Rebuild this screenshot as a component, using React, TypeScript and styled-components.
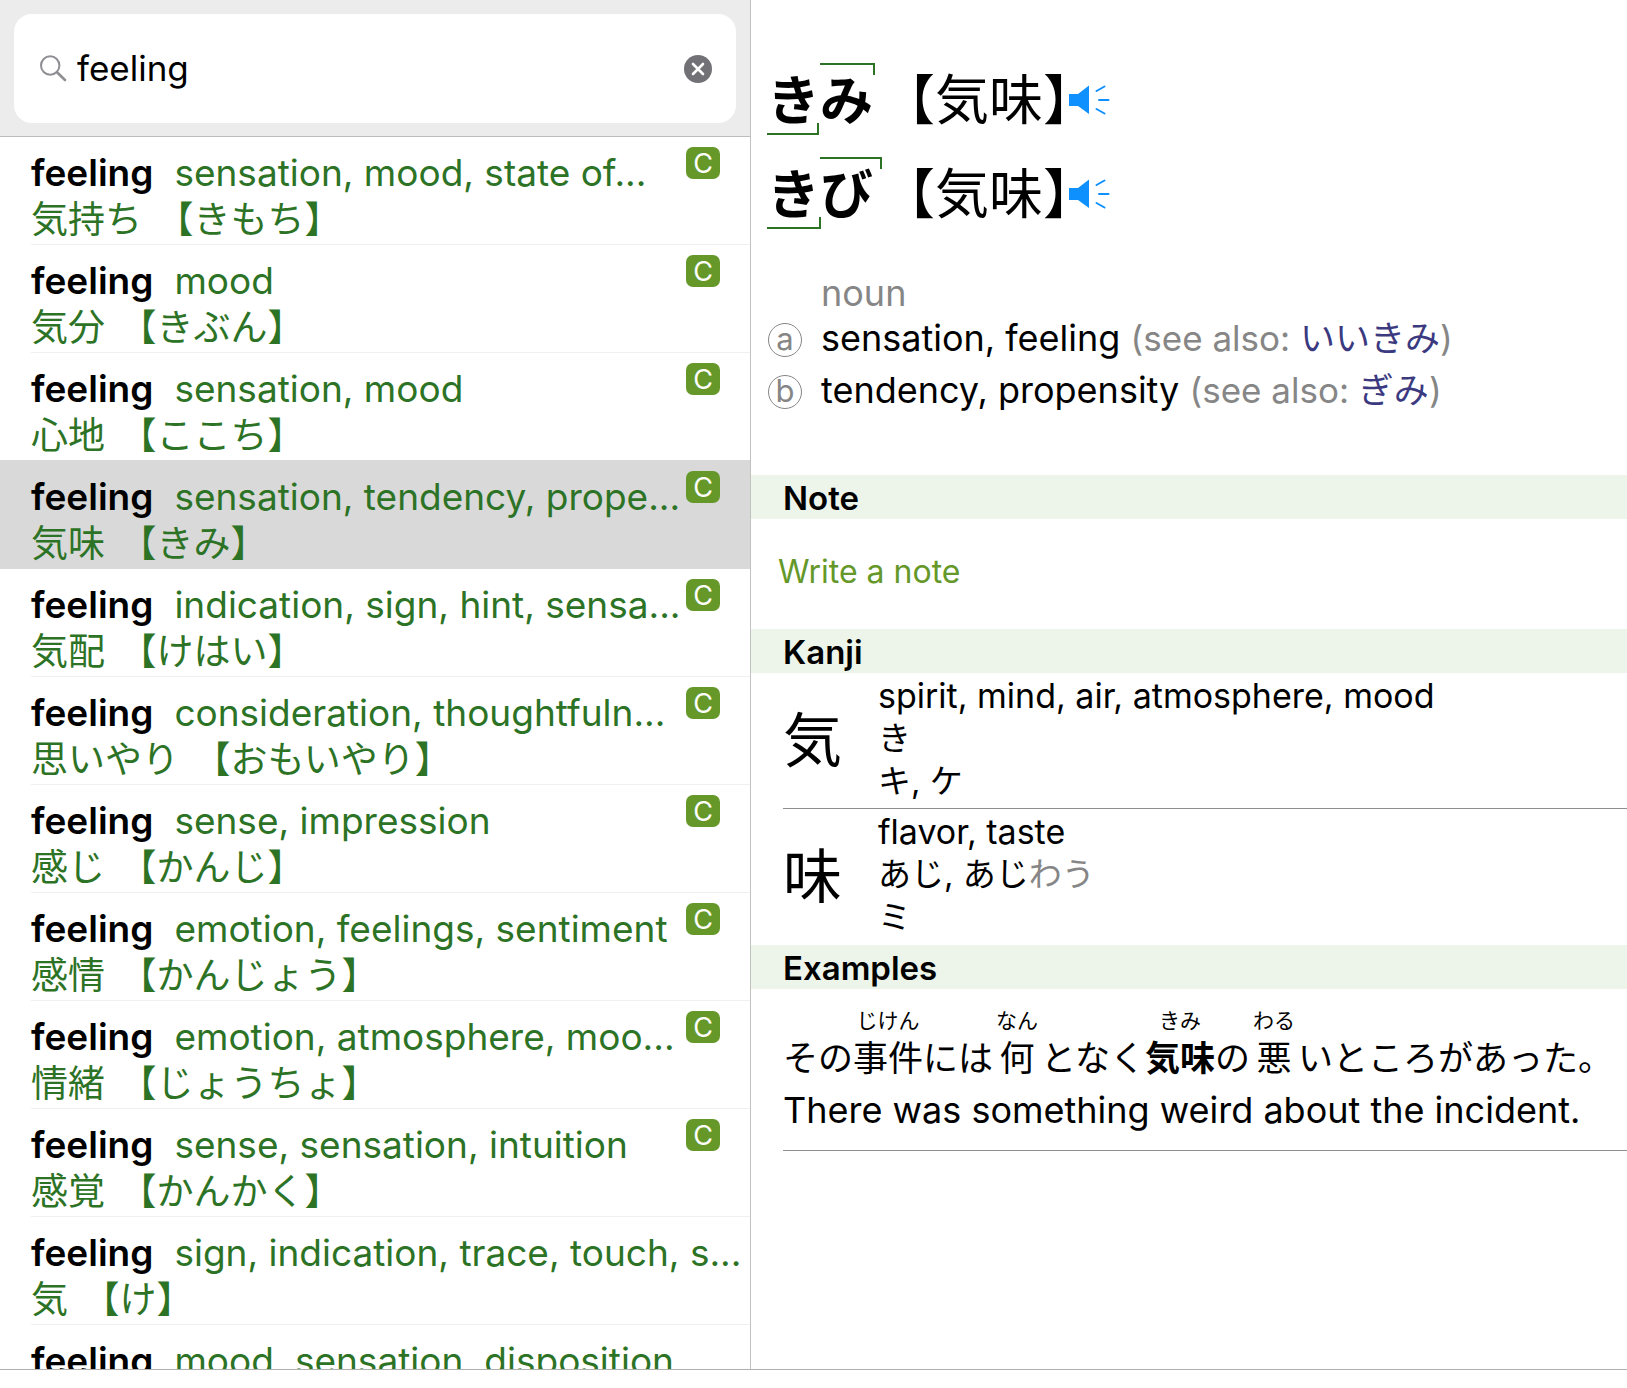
import React, { useState } from "react";
import styled, { createGlobalStyle } from "styled-components";

const GlobalStyle = createGlobalStyle`
  *, *::before, *::after { box-sizing: border-box; }
  html { background: #ffffff; }
  body {
    margin: 0;
    color: #000000;
    font-family: Inter, "Noto Sans CJK JP", sans-serif;
    font-size: 34px;
  }
  button, input { font: inherit; color: inherit; }
  h1, h2, p, ul, ol { margin: 0; padding: 0; font: inherit; }
  ul, ol { list-style: none; }
`;

const Shell = styled.div`
  display: grid;
  grid-template-columns: minmax(0, 751fr) minmax(0, 876fr);
  grid-template-rows: minmax(0, 1fr);
  height: calc(100vh - 18px);
  border-bottom: 1px solid #b0b0b0;
`;

const Sidebar = styled.aside`
  display: flex;
  flex-direction: column;
  overflow: hidden;
  border-right: 1px solid #c2c2c2;
`;

const SearchBar = styled.form`
  flex: none;
  padding: 14px 14px 13px;
  background: #ececec;
  border-bottom: 1px solid #bcbcbc;
`;

const SearchField = styled.label`
  display: flex;
  align-items: center;
  height: 109px;
  padding: 0 24px 0 26px;
  background: #ffffff;
  border-radius: 18px;
`;

const SearchInput = styled.input`
  flex: 1;
  min-width: 0;
  margin-left: 10px;
  padding: 0 0 2px;
  border: 0;
  outline: 0;
  background: transparent;
  font-size: 35px;
  line-height: 48px;
`;

const ClearButton = styled.button`
  display: flex;
  padding: 0;
  border: 0;
  background: none;
`;

const Results = styled.ul`
  flex: 1;
  min-height: 0;
  overflow: hidden;
`;

const ResultButton = styled.button<{ $selected: boolean }>`
  display: block;
  width: 100%;
  padding: 0 0 0 31px;
  border: 0;
  text-align: left;
  background: ${(p) => (p.$selected ? "#d9d9d9" : "transparent")};
  box-shadow: ${(p) => (p.$selected ? "0 -1px 0 #d9d9d9" : "none")};
`;

const ResultBody = styled.span<{ $selected: boolean }>`
  display: flex;
  align-items: flex-start;
  height: 108px;
  border-bottom: 1px solid ${(p) => (p.$selected ? "transparent" : "#efeff4")};
`;

const ResultText = styled.span`
  flex: 1;
  min-width: 0;
  padding-top: 13px;
  color: #2d7326;
  font-size: 37px;
  line-height: 46px;
  white-space: nowrap;
`;

const Line = styled.span`
  display: block;
`;

const JapaneseLine = styled(Line)`
  line-height: 48px;
`;

const Reading = styled.span`
  margin-left: 4px;
`;

const Term = styled.b`
  margin-right: 21px;
  color: #000000;
  font-weight: 600;
`;

const Badge = styled.span`
  flex: none;
  width: 34px;
  height: 32px;
  margin: 10px 30px 0 0;
  border-radius: 7px;
  background: #659829;
  color: #ffffff;
  font-size: 27px;
  line-height: 33px;
  text-align: center;
`;

const Detail = styled.main`
  overflow: hidden;
`;

const Headwords = styled.header`
  padding: 54px 16px 0;
`;

const Headword = styled.h1`
  display: flex;
  align-items: center;
  height: 94px;
  font-size: 54px;
  line-height: 94px;
`;

const Kana = styled.span`
  display: flex;
  width: 141px;
  font-size: 53px;
  font-weight: 700;
`;

const Mora = styled.span<{ $pitch: "low" | "high"; $overhang: number }>`
  position: relative;
  &::after {
    content: "";
    position: absolute;
    right: ${(p) => -p.$overhang}px;
    left: 0;
    height: 12px;
    border: 0 solid #2d7326;
    border-right-width: 2px;
    ${(p) =>
      p.$pitch === "low"
        ? "bottom: 13px; border-bottom-width: 2px;"
        : "top: 9px; border-top-width: 2px;"}
  }
`;

const Spelling = styled.span`
  font-feature-settings: "halt";
`;

const SpeakButton = styled.button`
  display: flex;
  padding: 0 0 2px;
  border: 0;
  background: none;
`;

const Senses = styled.section`
  padding: 32px 16px 59px;
  font-size: 36px;
`;

const PartOfSpeech = styled.p`
  padding-left: 54px;
  color: #868686;
  line-height: 38px;
`;

const Sense = styled.li`
  display: flex;
  align-items: center;
  height: 52px;
  line-height: 52px;
  white-space: nowrap;
`;

const Marker = styled.span`
  width: 34px;
  height: 34px;
  margin: 4px 19px 0 1px;
  border: 1px solid #868686;
  border-radius: 50%;
  color: #868686;
  font-size: 31px;
  line-height: 29px;
  text-align: center;
`;

const Muted = styled.span`
  color: #868686;
`;

const SeeAlso = styled(Muted)`
  font-size: 35px;
`;

const CrossLink = styled.a`
  color: #3b3a80;
  text-decoration: none;
`;

const SectionTitle = styled.h2`
  height: 44px;
  padding-left: 32px;
  background: #edf4e9;
  font-size: 33px;
  font-weight: 600;
  line-height: 46px;
`;

const NoteButton = styled.button`
  display: block;
  height: 110px;
  padding: 0 27px 6px;
  border: 0;
  background: none;
  color: #659829;
  font-size: 32px;
`;

const KanjiRow = styled.li`
  display: flex;
  align-items: center;
  height: 136px;
  margin-left: 32px;
  border-bottom: 1px solid #8e8e8e;
  &:last-child { border-bottom-color: transparent; }
`;

const Glyph = styled.span`
  width: 95px;
  font-size: 59px;
  line-height: 80px;
`;

const Readings = styled.div`
  padding-bottom: 5px;
  line-height: 43px;
`;

const KanaReading = styled.p`
  font-size: 33px;
`;

const Example = styled.article`
  margin-left: 32px;
  padding: 20px 0 13px;
  border-bottom: 1px solid #8e8e8e;
  white-space: nowrap;
`;

const Sentence = styled.p`
  font-size: 35px;
  line-height: 50px;
  b { font-weight: 700; }
`;

const Furigana = styled.ruby<{ $gap?: number }>`
  display: inline-flex;
  flex-direction: column-reverse;
  align-items: center;
  margin: 0 ${(p) => p.$gap ?? 0}px;
  vertical-align: bottom;
  rt {
    display: block;
    font-size: 21px;
    font-weight: 400;
    line-height: 24px;
  }
`;

const Translation = styled.p`
  font-size: 36px;
  line-height: 54px;
`;

const SearchIcon = () => (
  <svg width="27" height="27" viewBox="0 0 27 27" fill="none" stroke="#8e8e93" aria-hidden="true">
    <circle cx="10.2" cy="10.5" r="9.2" strokeWidth="2" />
    <path d="M17 17.2 25 25" strokeWidth="2.6" strokeLinecap="round" />
  </svg>
);

const ClearIcon = () => (
  <svg width="28" height="28" viewBox="0 0 28 28" aria-hidden="true">
    <circle cx="14" cy="14" r="14" fill="#717176" />
    <path d="M9 9 19 19M19 9 9 19" stroke="#fff" strokeWidth="2.6" strokeLinecap="round" />
  </svg>
);

const SpeakerIcon = () => (
  <svg width="42" height="32" viewBox="1 0 42 32" overflow="visible" aria-hidden="true">
    <path d="M0 10H9L20 1.5V30L9 22H0Z" fill="#0e90ff" />
    <path d="M27.5 7 35.5 2.5M30 16H39.5M27.5 25 35.5 29.5" stroke="#0e90ff" strokeWidth="2" strokeLinecap="round" />
  </svg>
);

const results = [
  { gloss: "sensation, mood, state of...", word: "気持ち", reading: "きもち", common: true },
  { gloss: "mood", word: "気分", reading: "きぶん", common: true },
  { gloss: "sensation, mood", word: "心地", reading: "ここち", common: true },
  { gloss: "sensation, tendency, prope...", word: "気味", reading: "きみ", common: true },
  { gloss: "indication, sign, hint, sensa...", word: "気配", reading: "けはい", common: true },
  { gloss: "consideration, thoughtfuln...", word: "思いやり", reading: "おもいやり", common: true },
  { gloss: "sense, impression", word: "感じ", reading: "かんじ", common: true },
  { gloss: "emotion, feelings, sentiment", word: "感情", reading: "かんじょう", common: true },
  { gloss: "emotion, atmosphere, moo...", word: "情緒", reading: "じょうちょ", common: true },
  { gloss: "sense, sensation, intuition", word: "感覚", reading: "かんかく", common: true },
  { gloss: "sign, indication, trace, touch, s...", word: "気", reading: "け", common: false },
  { gloss: "mood, sensation, disposition", word: "心持ち", reading: "こころもち", common: false },
];

const headwords = [
  { ending: "み", lowOverhang: -1, highOverhang: 2 },
  { ending: "び", lowOverhang: 1, highOverhang: 9 },
];

export default function App() {
  const [query, setQuery] = useState("feeling");
  const [selected, setSelected] = useState(3);

  return (
    <>
      <GlobalStyle />
      <Shell>
        <Sidebar>
          <SearchBar onSubmit={(e) => e.preventDefault()}>
            <SearchField>
              <SearchIcon />
              <SearchInput
                aria-label="Search"
                value={query}
                onChange={(e) => setQuery(e.target.value)}
              />
              <ClearButton type="button" aria-label="Clear" onClick={() => setQuery("")}>
                <ClearIcon />
              </ClearButton>
            </SearchField>
          </SearchBar>
          <Results>
            {results.map((r, i) => (
              <li key={r.word}>
                <ResultButton type="button" $selected={i === selected} onClick={() => setSelected(i)}>
                  <ResultBody $selected={i === selected}>
                    <ResultText>
                      <Line>
                        <Term>feeling</Term>
                        {r.gloss}
                      </Line>
                      <JapaneseLine lang="ja">
                        {r.word} <Reading>{`【${r.reading}】`}</Reading>
                      </JapaneseLine>
                    </ResultText>
                    {r.common && <Badge>C</Badge>}
                  </ResultBody>
                </ResultButton>
              </li>
            ))}
          </Results>
        </Sidebar>

        <Detail>
          <Headwords lang="ja">
            {headwords.map((h) => (
              <Headword key={h.ending}>
                <Kana>
                  <Mora $pitch="low" $overhang={h.lowOverhang}>き</Mora>
                  <Mora $pitch="high" $overhang={h.highOverhang}>{h.ending}</Mora>
                </Kana>
                <Spelling>【気味】</Spelling>
                <SpeakButton type="button" aria-label="Play">
                  <SpeakerIcon />
                </SpeakButton>
              </Headword>
            ))}
          </Headwords>

          <Senses>
            <PartOfSpeech>noun</PartOfSpeech>
            <ol>
              <Sense>
                <Marker>a</Marker>
                <span>
                  sensation, feeling{" "}
                  <SeeAlso>
                    (see also: <CrossLink href="#iikimi" lang="ja">いいきみ</CrossLink>)
                  </SeeAlso>
                </span>
              </Sense>
              <Sense>
                <Marker>b</Marker>
                <span>
                  tendency, propensity{" "}
                  <SeeAlso>
                    (see also: <CrossLink href="#gimi" lang="ja">ぎみ</CrossLink>)
                  </SeeAlso>
                </span>
              </Sense>
            </ol>
          </Senses>

          <SectionTitle>Note</SectionTitle>
          <NoteButton type="button">Write a note</NoteButton>

          <SectionTitle>Kanji</SectionTitle>
          <ul>
            <KanjiRow>
              <Glyph lang="ja">気</Glyph>
              <Readings>
                <p>spirit, mind, air, atmosphere, mood</p>
                <KanaReading lang="ja">き</KanaReading>
                <KanaReading lang="ja">キ, ケ</KanaReading>
              </Readings>
            </KanjiRow>
            <KanjiRow>
              <Glyph lang="ja">味</Glyph>
              <Readings>
                <p>flavor, taste</p>
                <KanaReading lang="ja">
                  あじ, あじ<Muted>わう</Muted>
                </KanaReading>
                <KanaReading lang="ja">ミ</KanaReading>
              </Readings>
            </KanjiRow>
          </ul>

          <SectionTitle>Examples</SectionTitle>
          <Example>
            <Sentence lang="ja">
              その<Furigana>事件<rt>じけん</rt></Furigana>には
              <Furigana $gap={3}>何<rt>なん</rt></Furigana>となく
              <b><Furigana>気味<rt>きみ</rt></Furigana></b>の
              <Furigana $gap={3}>悪<rt>わる</rt></Furigana>いところがあった。
            </Sentence>
            <Translation>There was something weird about the incident.</Translation>
          </Example>
        </Detail>
      </Shell>
    </>
  );
}
